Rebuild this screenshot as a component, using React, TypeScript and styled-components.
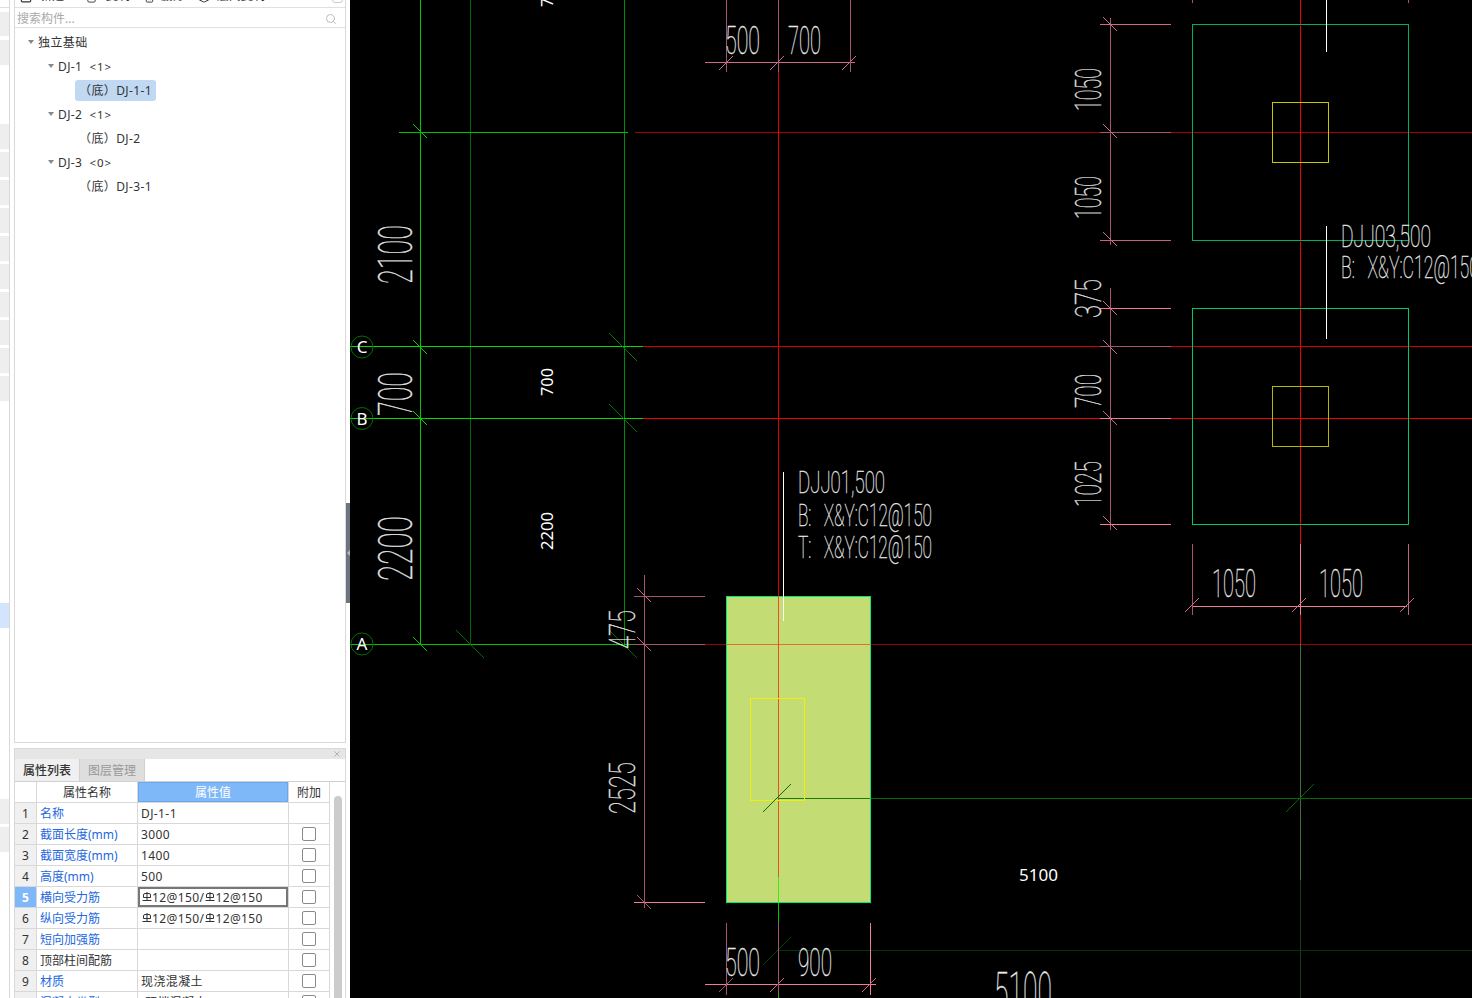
import React from "react";
import styled, { createGlobalStyle } from "styled-components";
import { FileCheck, FilePlus, Search, Trash2, X, Layers } from "lucide-react";

const GlobalStyle = createGlobalStyle`
  html, body { margin: 0; padding: 0; height: 100%; overflow: hidden; background: #fff; }
  body { font-family: "Noto Sans", "Noto Sans CJK SC", sans-serif; font-size: 12px; color: #333; }
`;

const Shell = styled.div`
  display: flex;
  width: 1472px;
  height: 998px;
  overflow: hidden;
`;

/* collapsed module rail on the far left */
const Rail = styled.div`
  flex: none;
  width: 9px;
  border-right: 1px solid #d8d8d8;
  margin-right: 4px;
  display: flex;
  flex-direction: column;
`;
const RailCap = styled.div`
  height: 12px;
  flex: none;
  box-sizing: border-box;
  background: linear-gradient(#fff 7px, #ddd 7px, #ddd 8px, #fff 8px);
`;
const RailBlock = styled.div<{ $tone: string; $h: number }>`
  flex: none;
  height: ${(p) => p.$h}px;
  background: ${(p) => p.$tone};
`;

const Column = styled.div`
  flex: none;
  width: 332px;
  display: flex;
  flex-direction: column;
`;

const TreePanel = styled.div`
  flex: none;
  height: 743px;
  box-sizing: border-box;
  border: 1px solid #d8d8d8;
  border-top: 0;
`;
const TopTools = styled.div`
  height: 8px;
  box-sizing: border-box;
  padding: 0 0 5px 4px;
  display: flex;
  align-items: flex-end;
  overflow: hidden;
  border-bottom: 1px solid #e0e0e0;
  position: relative;
`;
const ToolItem = styled.div<{ $w: number; $gap: number }>`
  flex: none;
  width: ${(p) => p.$w}px;
  display: flex;
  align-items: flex-end;
  gap: ${(p) => p.$gap}px;
  color: #333;
  line-height: 12px;
  svg { flex: none; margin-bottom: -1px; }
`;
const CornerBox = styled.span`
  position: absolute;
  right: 2px;
  bottom: 4px;
  width: 9px;
  height: 9px;
  border: 1px solid #ccc;
  border-radius: 3px;
`;
const SearchRow = styled.div`
  height: 20px;
  box-sizing: border-box;
  display: flex;
  align-items: center;
  justify-content: space-between;
  padding: 2px 8px 0 2px;
  border-bottom: 1px solid #e0e0e0;
  color: #aaa;
  line-height: 17px;
`;
const TreeList = styled.div`
  padding-top: 2px;
`;
const TreeRow = styled.div<{ $level: number }>`
  height: 24px;
  display: flex;
  align-items: center;
  gap: 4px;
  padding-left: ${(p) => [13, 33, 60][p.$level]}px;
  color: #333;
  white-space: nowrap;
  letter-spacing: 0.4px;
`;
const Caret = styled.span`
  width: 0;
  height: 0;
  border-left: 3.5px solid transparent;
  border-right: 3.5px solid transparent;
  border-top: 4px solid #888;
`;
const Count = styled.span`
  margin-left: 3px;
  font-size: 11.5px;
  letter-spacing: 1px;
`;
const Pill = styled.span<{ $active?: boolean }>`
  display: flex;
  align-items: center;
  height: 21px;
  padding: 0 4px;
  border-radius: 3px;
  background: ${(p) => (p.$active ? "#c0d8f2" : "transparent")};
`;

const PropPanel = styled.div`
  margin-top: 5px;
  flex: none;
  height: 260px;
  box-sizing: border-box;
  border: 1px solid #d8d8d8;
  border-bottom: 0;
  overflow: hidden;
`;
const TitleBar = styled.div`
  height: 10px;
  background: #e6e6e6;
  display: flex;
  align-items: center;
  justify-content: flex-end;
  padding-right: 3px;
  color: #aaa;
`;
const Tabs = styled.div`
  height: 23px;
  box-sizing: border-box;
  display: flex;
  border-bottom: 1px solid #d0d0d0;
`;
const Tab = styled.div<{ $on?: boolean }>`
  width: 65px;
  box-sizing: border-box;
  border-right: 1px solid #d0d0d0;
  text-align: center;
  line-height: 24px;
  background: ${(p) => (p.$on ? "#f0f0f0" : "#dedede")};
  color: ${(p) => (p.$on ? "#333" : "#999")};
  font-weight: ${(p) => (p.$on ? 500 : 400)};
`;
const TableWrap = styled.div`
  display: flex;
`;
const Grid = styled.div`
  flex: none;
  width: 315px;
`;
const Row = styled.div`
  display: grid;
  grid-template-columns: 22px 101px 151px 41px;
  height: 21px;
  box-sizing: border-box;
  border-bottom: 1px solid #d8d8d8;
`;
const Cell = styled.div`
  box-sizing: border-box;
  border-right: 1px solid #d8d8d8;
  line-height: 22px;
  white-space: nowrap;
  overflow: hidden;
`;
const HeadCell = styled(Cell)<{ $on?: boolean }>`
  text-align: center;
  background: ${(p) => (p.$on ? "#7eb8f8" : "#fff")};
  color: ${(p) => (p.$on ? "#fff" : "#333")};
  box-shadow: ${(p) => (p.$on ? "inset 0 0 0 1px #6aa8ee" : "none")};
`;
const IndexCell = styled(Cell)<{ $on?: boolean }>`
  text-align: center;
  background: ${(p) => (p.$on ? "#7eb8f8" : "#f0f0f0")};
  color: ${(p) => (p.$on ? "#fff" : "#333")};
  font-weight: ${(p) => (p.$on ? 700 : 400)};
`;
const NameCell = styled(Cell)<{ $plain?: boolean }>`
  padding-left: 3px;
  color: ${(p) => (p.$plain ? "#333" : "#2468e0")};
`;
const ValueCell = styled(Cell)<{ $on?: boolean }>`
  padding-left: 3px;
  letter-spacing: 0.4px;
  box-shadow: ${(p) => (p.$on ? "inset 0 0 0 2px #777" : "none")};
`;
const CheckCell = styled(Cell)`
  display: flex;
  align-items: center;
  justify-content: center;
`;
const Check = styled.span`
  display: block;
  box-sizing: border-box;
  width: 14px;
  height: 14px;
  border: 1px solid #8a8a8a;
  border-radius: 2px;
`;
const ScrollTrack = styled.div`
  flex: 1;
  padding: 14px 3px 0 4px;
`;
const ScrollThumb = styled.div`
  width: 8px;
  height: 220px;
  border-radius: 4px;
  background: #ccc;
`;
const Rebar = styled.svg`
  display: inline-block;
  width: 10px;
  height: 9px;
  margin: 0 0 4px 1px;
  vertical-align: middle;
`;

const Splitter = styled.div`
  flex: none;
  width: 4px;
  padding-top: 503px;
`;
const SplitHandle = styled.div`
  height: 100px;
  background: #6b7580;
  display: flex;
  align-items: center;
  justify-content: flex-end;
  &::after {
    content: "";
    border-top: 3px solid transparent;
    border-bottom: 3px solid transparent;
    border-right: 3px solid #b8b8b8;
  }
`;

const Canvas = styled.svg`
  flex: none;
  display: block;
  width: 1122px;
  height: 998px;
  background: #000;
`;
const CadLabel = styled.text`
  font-family: "Roboto", "Liberation Sans", sans-serif;
  font-weight: 100;
  fill: #e8e8e8;
  stroke: #e8e8e8;
  stroke-width: 0.35px;
`;
const SolidLabel = styled.text`
  font-family: "Noto Sans", "Liberation Sans", sans-serif;
  fill: #fff;
`;

const railItems: [string, number][] = [
  ["#eee", 24], ["#fff", 4], ["#eee", 25], ["#fff", 59],
  ...Array.from({ length: 10 }, () => [["#eee", 25], ["#fff", 3]] as [string, number][]).flat(),
  ["#fff", 199], ["#d2e5fc", 25], ["#fff", 171], ["#eee", 25], ["#fff", 3], ["#eee", 25],
];

const rows = [
  { name: "名称", value: "DJ-1-1", noCheck: true },
  { name: "截面长度(mm)", value: "3000" },
  { name: "截面宽度(mm)", value: "1400" },
  { name: "高度(mm)", value: "500" },
  { name: "横向受力筋", rebar: true, on: true },
  { name: "纵向受力筋", rebar: true },
  { name: "短向加强筋", value: "" },
  { name: "顶部柱间配筋", value: "", plain: true },
  { name: "材质", value: "现浇混凝土" },
  { name: "混凝土类型", value: "(预拌混凝土)" },
];

const RebarMark = () => (
  <Rebar viewBox="0 0 10 9" fill="none" stroke="#333" strokeWidth="1">
    <path d="M1.5 5.5V3q0-1.5 1.5-1.5h4Q8.500 1.500 8.500 3v2.500z M5 0v8 M0.500 8.500h9" />
  </Rebar>
);

const Green = "#00dc00";
const Dim = "#a4546c";
const Pink = "#f07c98";

type Seg = [number, number, number, number, string];
// one pixel lines sit on even rows and columns, odd ones lose their colour in the photo
const snap = (n: number) => n + (n & 1) + 0.5;
const h = (y: number, a: number, b: number, c: string): Seg => [a, snap(y), b, snap(y), c];
const v = (x: number, a: number, b: number, c: string): Seg => [snap(x), a, snap(x), b, c];
const back = (x: number, y: number, c: string, r = 7): Seg => [x - r, y - r, x + r, y + r, c];
const fwd = (x: number, y: number, c: string, r = 7): Seg => [x - r, y + r, x + r, y - r, c];

const under: Seg[] = [
  // axis lines
  v(419, 0, 644, "#00c800"),
  v(469, 0, 644, "#006400"),
  v(623, 0, 644, "#008c00"),
  h(131, 399, 628, "#00c000"),
  h(131, 635, 1472, "#a80000"),
  h(346, 350, 643, Green),
  h(346, 643, 1472, "#d80000"),
  h(418, 350, 643, Green),
  h(418, 643, 1472, "#f00000"),
  h(643, 350, 634, "#00c000"),
  h(643, 634, 1472, "#960000"),
  v(777, 70, 877, "#e00000"),
  v(777, 877, 998, "#00c800"),
  v(1299, 0, 644, "#e80000"),
  v(1299, 644, 880, "#3e6e3e"),
  v(1299, 880, 998, "#1c3a1c"),
  h(797, 777, 1472, "#006c00"),
  h(950, 777, 1472, "#003800"),
  back(420, 131, "#00d000"),
  back(420, 347, Green),
  back(420, 418, Green),
  back(420, 644, "#00c000"),
  back(470, 644, "#007000", 14),
  back(623, 347, "#007800", 14),
  back(623, 418, "#007800", 14),
  back(623, 644, "#006c00", 14),
  fwd(1300, 798, "#006c00", 14),
  fwd(777, 951, "#004000", 14),
];

const dims: Seg[] = [
  // top dimension
  h(62, 705, 855, "#d06a88"),
  v(725, 0, 72, Dim), v(777, 0, 72, Dim), v(849, 0, 72, Dim),
  fwd(726, 63, "#d06a88"), fwd(777, 63, "#d06a88"), fwd(849, 63, "#d06a88"),
  // column dims on the right
  v(1110, 18, 245, Dim),
  h(24, 1100, 1171, "#d06a88"), h(131, 1100, 1171, Dim), h(239, 1100, 1171, "#c06480"),
  back(1110, 24, "#d06a88"), back(1110, 131, "#d06a88"), back(1110, 239, "#d06a88"),
  v(1110, 288, 530, Dim),
  h(308, 1100, 1171, Pink), h(346, 1100, 1171, Dim), h(418, 1100, 1171, Pink), h(523, 1100, 1171, Pink),
  back(1110, 308, "#d06a88"), back(1110, 347, "#d06a88"), back(1110, 418, "#d06a88"), back(1110, 523, "#d06a88"),
  h(605, 1192, 1407, Pink),
  v(1192, 544, 615, Dim), v(1299, 544, 615, Pink), v(1407, 544, 615, "#c06480"),
  fwd(1192, 605, "#d06a88"), fwd(1299, 605, "#d06a88"), fwd(1407, 605, "#d06a88"),
  v(1192, 0, 3, Dim), v(1407, 0, 3, Dim),
  // block dims
  v(644, 575, 908, Dim),
  h(595, 634, 705, Dim), h(643, 634, 705, Dim), h(902, 634, 705, Pink),
  back(644, 595, "#d06a88"), back(644, 644, "#d06a88"), back(644, 902, "#a4546c"),
  h(984, 705, 876, Pink),
  v(725, 923, 995, Dim), v(777, 923, 995, Dim), v(869, 923, 995, Pink),
  fwd(726, 985, Dim), fwd(777, 985, "#d06a88"), fwd(869, 985, "#d06a88"),
];

const cadTexts: { t: string; x: number; y: number; w: number; s: number; up?: boolean }[] = [
  { t: "500", x: 725, y: 54, w: 35, s: 27 },
  { t: "700", x: 788, y: 54, w: 33, s: 27 },
  { t: "500", x: 725, y: 976, w: 35, s: 27 },
  { t: "900", x: 798, y: 976, w: 34, s: 27 },
  { t: "5100", x: 994, y: 1010, w: 58, s: 38 },
  { t: "1050", x: 1212, y: 597, w: 44, s: 27 },
  { t: "1050", x: 1319, y: 597, w: 44, s: 27 },
  { t: "DJJ01,500", x: 798, y: 493, w: 87, s: 22 },
  { t: "B:\u00a0\u00a0\u00a0X&Y:C12@150", x: 798, y: 526, w: 134, s: 22 },
  { t: "T:\u00a0\u00a0\u00a0X&Y:C12@150", x: 798, y: 558, w: 134, s: 22 },
  { t: "DJJ03,500", x: 1341, y: 247, w: 90, s: 22 },
  { t: "B:\u00a0\u00a0\u00a0X&Y:C12@150", x: 1341, y: 278, w: 138, s: 22 },
  { t: "2100", x: 412, y: 284, w: 59, s: 34, up: true },
  { t: "700", x: 412, y: 416, w: 44, s: 34, up: true },
  { t: "2200", x: 412, y: 581, w: 65, s: 34, up: true },
  { t: "475", x: 635, y: 649, w: 39, s: 26, up: true },
  { t: "2525", x: 635, y: 814, w: 52, s: 26, up: true },
  { t: "1050", x: 1101, y: 111, w: 43, s: 26, up: true },
  { t: "1050", x: 1101, y: 219, w: 43, s: 26, up: true },
  { t: "375", x: 1101, y: 318, w: 39, s: 26, up: true },
  { t: "700", x: 1101, y: 408, w: 34, s: 26, up: true },
  { t: "1025", x: 1101, y: 507, w: 46, s: 26, up: true },
];

const bubbles = [
  { t: "C", y: 347 },
  { t: "B", y: 418.5 },
  { t: "A", y: 644 },
];

const Segs = ({ items }: { items: Seg[] }) => (
  <>
    {items.map((s, i) => (
      <line key={i} x1={s[0]} y1={s[1]} x2={s[2]} y2={s[3]} stroke={s[4]} strokeWidth="1" />
    ))}
  </>
);

const Drawing = () => (
  <Canvas viewBox="350 0 1122 998">
    <Segs items={under} />
    {/* upper footings */}
    <rect x="1192.5" y="24.5" width="216" height="216" fill="none" stroke="#00b060" />
    <rect x="1272.5" y="102.5" width="56" height="60" fill="none" stroke="#c8c800" />
    <rect x="1192.5" y="308.5" width="216" height="216" fill="none" stroke="#00c868" />
    <rect x="1272.5" y="386.5" width="56" height="60" fill="none" stroke="#b8b800" />

    {/* selected footing */}
    <rect x="726.5" y="596.5" width="144" height="306" fill="#c4dc74" stroke="#00e870" />
    <line x1="727" y1="644.5" x2="870" y2="644.5" stroke="#e86c34" />
    <line x1="778.5" y1="596" x2="778.5" y2="877" stroke="#e85020" />
    <line x1="778.5" y1="877" x2="778.5" y2="902" stroke="#40e820" />
    <line x1="778" y1="798.5" x2="870" y2="798.5" stroke="#1a7c08" />
    <rect x="750.5" y="698.5" width="54" height="102" fill="none" stroke="#eeee10" />
    <line x1="763" y1="812" x2="791" y2="784" stroke="#0a6a08" />

    <Segs items={dims} />

    {/* leaders */}
    <line x1="783.5" y1="472" x2="783.5" y2="621" stroke="#fff" />
    <line x1="1326.5" y1="0" x2="1326.5" y2="52" stroke="#fff" />
    <line x1="1326.5" y1="226" x2="1326.5" y2="339" stroke="#fff" />

    {bubbles.map((b) => (
      <g key={b.t}>
        <circle cx="362" cy={b.y} r="11" fill="none" stroke="#007000" />
        <SolidLabel x="362" y={b.y + 6} fontSize="17" textAnchor="middle">
          {b.t}
        </SolidLabel>
      </g>
    ))}

    {cadTexts.map((c, i) => (
      <CadLabel
        key={i}
        x={c.x}
        y={c.y}
        fontSize={c.s / 0.71}
        textLength={c.w}
        lengthAdjust="spacingAndGlyphs"
        transform={c.up ? `rotate(-90 ${c.x} ${c.y})` : undefined}
      >
        {c.t}
      </CadLabel>
    ))}

    <SolidLabel x="553" y="7" fontSize="16" textLength="27" lengthAdjust="spacingAndGlyphs" transform="rotate(-90 553 7)">700</SolidLabel>
    <SolidLabel x="553" y="396" fontSize="16" textLength="28" lengthAdjust="spacingAndGlyphs" transform="rotate(-90 553 396)">700</SolidLabel>
    <SolidLabel x="553" y="550" fontSize="16" textLength="38" lengthAdjust="spacingAndGlyphs" transform="rotate(-90 553 550)">2200</SolidLabel>
    <SolidLabel x="1019" y="881" fontSize="16" textLength="39" lengthAdjust="spacingAndGlyphs">5100</SolidLabel>
  </Canvas>
);

export default function App() {
  return (
    <Shell>
      <GlobalStyle />
      <Rail>
        <RailCap />
        {railItems.map(([tone, size], i) => (
          <RailBlock key={i} $tone={tone} $h={size} />
        ))}
      </Rail>

      <Column>
        <TreePanel>
          <TopTools>
            <ToolItem $w={67} $gap={7}><FilePlus size={14} />新建</ToolItem>
            <ToolItem $w={58} $gap={9}><FileCheck size={11} />复制</ToolItem>
            <ToolItem $w={54} $gap={6}><Trash2 size={11} />删除</ToolItem>
            <ToolItem $w={70} $gap={7}><Layers size={12} />层间复制</ToolItem>
            <CornerBox />
          </TopTools>
          <SearchRow>
            搜索构件...
            <Search size={12} color="#bbb" />
          </SearchRow>
          <TreeList>
            <TreeRow $level={0}><Caret />独立基础</TreeRow>
            <TreeRow $level={1}><Caret />DJ-1<Count>&lt;1&gt;</Count></TreeRow>
            <TreeRow $level={2}><Pill $active>（底）DJ-1-1</Pill></TreeRow>
            <TreeRow $level={1}><Caret />DJ-2<Count>&lt;1&gt;</Count></TreeRow>
            <TreeRow $level={2}><Pill>（底）DJ-2</Pill></TreeRow>
            <TreeRow $level={1}><Caret />DJ-3<Count>&lt;0&gt;</Count></TreeRow>
            <TreeRow $level={2}><Pill>（底）DJ-3-1</Pill></TreeRow>
          </TreeList>
        </TreePanel>

        <PropPanel>
          <TitleBar><X size={10} /></TitleBar>
          <Tabs>
            <Tab $on>属性列表</Tab>
            <Tab>图层管理</Tab>
          </Tabs>
          <TableWrap>
            <Grid>
              <Row>
                <HeadCell />
                <HeadCell>属性名称</HeadCell>
                <HeadCell $on>属性值</HeadCell>
                <HeadCell>附加</HeadCell>
              </Row>
              {rows.map((r, i) => (
                <Row key={r.name}>
                  <IndexCell $on={r.on}>{i + 1}</IndexCell>
                  <NameCell $plain={r.plain}>{r.name}</NameCell>
                  <ValueCell $on={r.on}>
                    {r.rebar ? (
                      <>
                        <RebarMark />12@150/<RebarMark />12@150
                      </>
                    ) : (
                      r.value
                    )}
                  </ValueCell>
                  <CheckCell>{!r.noCheck && <Check />}</CheckCell>
                </Row>
              ))}
            </Grid>
            <ScrollTrack>
              <ScrollThumb />
            </ScrollTrack>
          </TableWrap>
        </PropPanel>
      </Column>

      <Splitter>
        <SplitHandle />
      </Splitter>

      <Drawing />
    </Shell>
  );
}
